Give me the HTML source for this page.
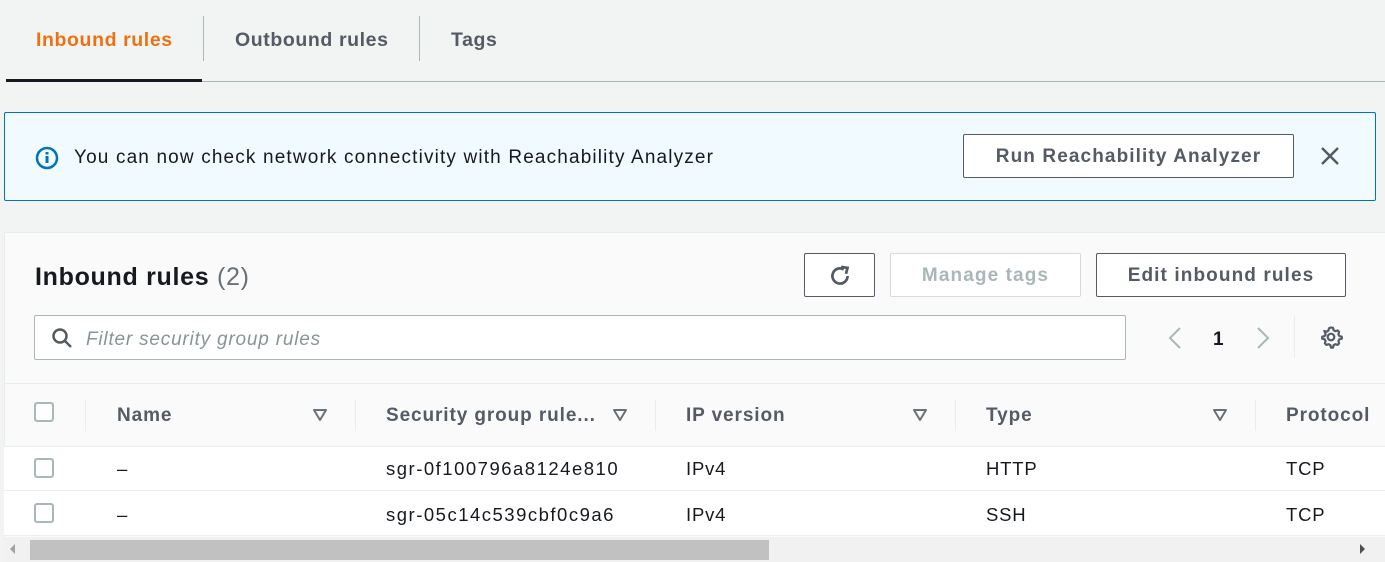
<!DOCTYPE html>
<html><head><style>
*{box-sizing:border-box;margin:0;padding:0}
body{width:1385px;height:562px;overflow:hidden;background:#f2f3f3;font-family:"Liberation Sans",sans-serif;color:#16191f;position:relative}
.a{position:absolute}
.tab{font-size:19.5px;font-weight:bold;color:#545b64;top:29px;letter-spacing:0.6px}
.sep{width:1px;background:#aab7b8}
.btn{border:1px solid #545b64;border-radius:2px;background:#fff;font-weight:bold;font-size:19px;color:#545b64;display:flex;align-items:center;justify-content:center;letter-spacing:1.1px;padding-top:2px}
.th{font-size:19px;font-weight:bold;color:#545b64;top:405px;letter-spacing:0.9px}
.tri{top:408px}
.cs{width:1px;background:#eaeded;top:400px;height:31px}
.cb{width:20px;height:20px;border:2px solid #aab7b8;border-radius:3px;background:#fff;left:34px}
.td{font-size:18.5px;color:#16191f;letter-spacing:1.5px}
.td.s{letter-spacing:0.8px}
</style></head><body>
<div class="a tab" style="left:36px;color:#ec7211">Inbound rules</div>
<div class="a sep" style="left:203px;top:16px;height:45px"></div>
<div class="a tab" style="left:235px">Outbound rules</div>
<div class="a sep" style="left:419px;top:16px;height:45px"></div>
<div class="a tab" style="left:451px">Tags</div>
<div class="a" style="left:6px;top:81px;width:1379px;height:1px;background:#aab7b8"></div>
<div class="a" style="left:6px;top:79px;width:196px;height:3px;background:#16191f"></div>

<div class="a" style="left:4px;top:112px;width:1372px;height:89px;background:#f1faff;border:1px solid #0073bb;border-radius:2px"></div>
<svg class="a" style="left:35px;top:146px" width="24" height="24" viewBox="0 0 24 24"><circle cx="12" cy="12" r="10" fill="none" stroke="#0073bb" stroke-width="2.5"/><rect x="10.5" y="10" width="3" height="7" fill="#0073bb"/><rect x="10.5" y="6" width="3" height="2.5" fill="#0073bb"/></svg>
<div class="a" style="left:74px;top:147px;font-size:19px;letter-spacing:1.15px">You can now check network connectivity with Reachability Analyzer</div>
<div class="a btn" style="left:963px;top:134px;width:331px;height:44px">Run Reachability Analyzer</div>
<svg class="a" style="left:1320px;top:146px" width="20" height="20"><path d="M2 2L18 18M18 2L2 18" stroke="#545b64" stroke-width="2.5"/></svg>

<div class="a" style="left:4px;top:232px;width:1381px;height:306px;background:#fafafa;border-top:1px solid #eaeded;border-left:1px solid #eaeded"></div>
<div class="a" style="left:35px;top:263px;font-size:25px;font-weight:bold;letter-spacing:0.7px">Inbound rules <span style="font-weight:normal;color:#687078">(2)</span></div>
<div class="a btn" style="left:804px;top:253px;width:71px;height:44px"><svg width="26" height="26" viewBox="0 0 24 24"><path d="M19 12A7 7 0 1 1 15.5 5.9" fill="none" stroke="#545b64" stroke-width="2.5"/><path d="M13 3.5L19 4.5L17.5 10" fill="none" stroke="#545b64" stroke-width="2.5"/></svg></div>
<div class="a btn" style="left:890px;top:253px;width:191px;height:44px;border-color:#d5dbdb;color:#aab7b8">Manage tags</div>
<div class="a btn" style="left:1096px;top:253px;width:250px;height:44px">Edit inbound rules</div>

<div class="a" style="left:34px;top:315px;width:1092px;height:45px;background:#fff;border:1px solid #aab7b8;border-radius:2px"></div>
<svg class="a" style="left:51px;top:327px" width="22" height="22"><circle cx="9" cy="9" r="6.5" fill="none" stroke="#545b64" stroke-width="2.5"/><path d="M14 14L20 20" stroke="#545b64" stroke-width="2.5"/></svg>
<div class="a" style="left:86px;top:329px;font-size:19px;font-style:italic;color:#879596;letter-spacing:0.8px">Filter security group rules</div>
<svg class="a" style="left:1165px;top:326px" width="20" height="24"><path d="M15 2L5 12L15 22" fill="none" stroke="#aab7b8" stroke-width="2"/></svg>
<div class="a" style="left:1213px;top:329px;font-size:19px;font-weight:bold">1</div>
<svg class="a" style="left:1253px;top:326px" width="20" height="24"><path d="M5 2L15 12L5 22" fill="none" stroke="#aab7b8" stroke-width="2"/></svg>
<div class="a" style="left:1294px;top:316px;width:1px;height:42px;background:#eaeded"></div>
<svg class="a" style="left:1319px;top:325px" width="24" height="24" viewBox="0 0 24 24"><path d="M12 2.5l2 .3.6 2.4 1.7 1 2.4-.7 1.4 1.5-.7 2.4 1 1.7 2.4.6v2l-2.4.6-1 1.7.7 2.4-1.4 1.5-2.4-.7-1.7 1-.6 2.4h-2l-.6-2.4-1.7-1-2.4.7-1.4-1.5.7-2.4-1-1.7-2.4-.6v-2l2.4-.6 1-1.7-.7-2.4L5.3 6l2.4.7 1.7-1L10 3.3z" fill="none" stroke="#545b64" stroke-width="2.2" stroke-linejoin="round"/><circle cx="12" cy="12" r="3.3" fill="none" stroke="#545b64" stroke-width="2.2"/></svg>

<div class="a" style="left:4px;top:383px;width:1381px;height:1px;background:#eaeded"></div>
<div class="a cb" style="top:402px"></div>
<div class="a cs" style="left:85px"></div>
<div class="a th" style="left:117px">Name</div><svg class="a tri" style="left:312px" width="16" height="14"><path d="M2 2H14L8 12Z" fill="none" stroke="#687078" stroke-width="2" stroke-linejoin="round"/></svg>
<div class="a cs" style="left:355px"></div>
<div class="a th" style="left:386px">Security group rule...</div><svg class="a tri" style="left:612px" width="16" height="14"><path d="M2 2H14L8 12Z" fill="none" stroke="#687078" stroke-width="2" stroke-linejoin="round"/></svg>
<div class="a cs" style="left:655px"></div>
<div class="a th" style="left:686px">IP version</div><svg class="a tri" style="left:912px" width="16" height="14"><path d="M2 2H14L8 12Z" fill="none" stroke="#687078" stroke-width="2" stroke-linejoin="round"/></svg>
<div class="a cs" style="left:955px"></div>
<div class="a th" style="left:986px">Type</div><svg class="a tri" style="left:1212px" width="16" height="14"><path d="M2 2H14L8 12Z" fill="none" stroke="#687078" stroke-width="2" stroke-linejoin="round"/></svg>
<div class="a cs" style="left:1255px"></div>
<div class="a th" style="left:1286px">Protocol</div>

<div class="a" style="left:4px;top:446px;width:1381px;height:90px;background:#fff;border-top:1px solid #eaeded"></div>
<div class="a" style="left:4px;top:490px;width:1381px;height:1px;background:#eaeded"></div>
<div class="a" style="left:4px;top:535px;width:1381px;height:1px;background:#eaeded"></div>
<div class="a cb" style="top:458px"></div>
<div class="a td" style="left:117px;top:458px">–</div>
<div class="a td" style="left:386px;top:458px">sgr-0f100796a8124e810</div>
<div class="a td s" style="left:686px;top:458px">IPv4</div>
<div class="a td s" style="left:986px;top:458px">HTTP</div>
<div class="a td s" style="left:1286px;top:458px">TCP</div>
<div class="a cb" style="top:503px"></div>
<div class="a td" style="left:117px;top:504px">–</div>
<div class="a td" style="left:386px;top:504px">sgr-05c14c539cbf0c9a6</div>
<div class="a td s" style="left:686px;top:504px">IPv4</div>
<div class="a td s" style="left:986px;top:504px">SSH</div>
<div class="a td s" style="left:1286px;top:504px">TCP</div>

<div class="a" style="left:4px;top:537px;width:1381px;height:25px;background:#f1f1f1"></div>
<div class="a" style="left:30px;top:540px;width:739px;height:20px;background:#c1c1c1"></div>
<div class="a" style="left:10px;top:544px;width:0;height:0;border-top:5px solid transparent;border-bottom:5px solid transparent;border-right:5px solid #a3a3a3"></div>
<div class="a" style="left:1360px;top:544px;width:0;height:0;border-top:5px solid transparent;border-bottom:5px solid transparent;border-left:5px solid #505050"></div>
</body></html>
